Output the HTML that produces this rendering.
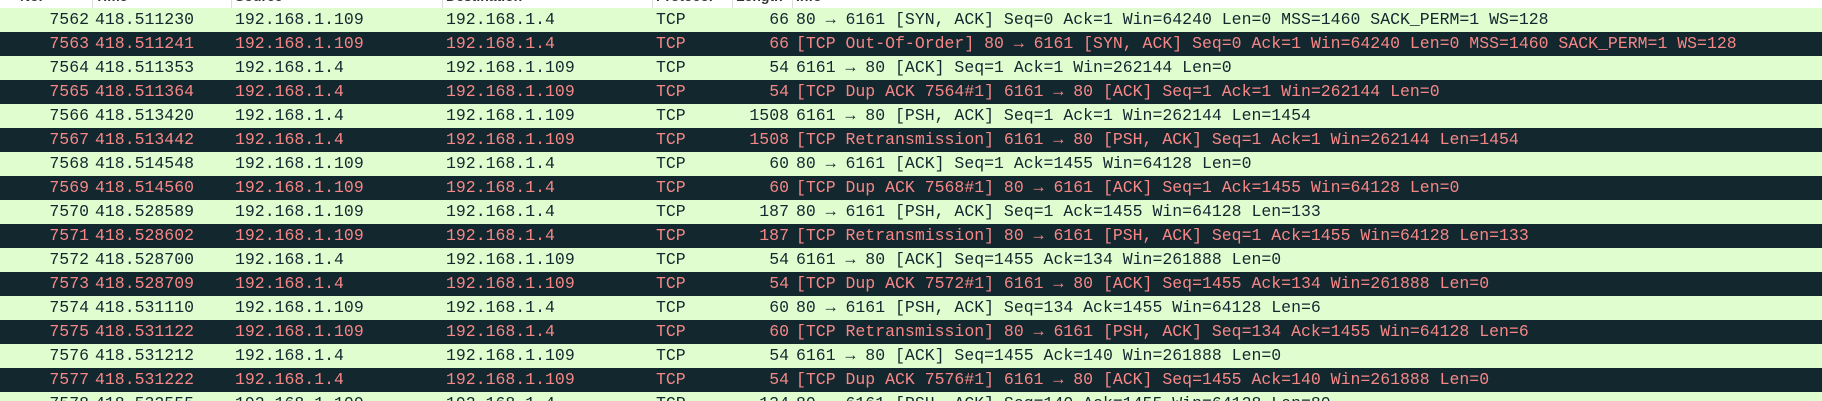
<!DOCTYPE html>
<html><head><meta charset="utf-8"><style>
html,body{margin:0;padding:0;width:1822px;height:401px;overflow:hidden;background:#fff}
body{font-family:"Liberation Mono","DejaVu Sans Mono",monospace;font-size:16.5px}
#w{position:relative;width:1822px;height:401px;overflow:hidden}
.hdr{position:absolute;left:0;top:0;width:1822px;height:8px;background:#fff;overflow:hidden}
.hdr span{position:absolute;top:-14px;line-height:20px;color:#333;font-family:"Liberation Sans",sans-serif;font-size:14px;font-weight:bold}
.sep{position:absolute;top:0;width:1px;height:8px;background:#ddd}
.r{position:absolute;left:0;width:1822px;height:24px;line-height:24px;white-space:pre;overflow:hidden}
.g{background:#e0fdd0;color:#12272e}
.d{background:#12272e;color:#f78787}
.r span{position:absolute;top:0}
.no{right:calc(1822px - 89px)}
.t{left:95px}.s{left:235px}.de{left:446px}.p{left:656px}
.l{right:calc(1822px - 789px)}
.i{left:796px}
</style></head><body><div id="w">
<div class="hdr"><span style="left:20px">No.</span><span style="left:95px">Time</span><span style="left:235px">Source</span><span style="left:446px">Destination</span><span style="left:656px">Protocol</span><span style="left:736px">Length</span><span style="left:796px">Info</span>
<div class="sep" style="left:92px"></div><div class="sep" style="left:231px"></div><div class="sep" style="left:442px"></div><div class="sep" style="left:652px"></div><div class="sep" style="left:732px"></div><div class="sep" style="left:792px"></div></div>

<div class="r g" style="top:8px"><span class="no">7562</span><span class="t">418.511230</span><span class="s">192.168.1.109</span><span class="de">192.168.1.4</span><span class="p">TCP</span><span class="l">66</span><span class="i">80 → 6161 [SYN, ACK] Seq=0 Ack=1 Win=64240 Len=0 MSS=1460 SACK_PERM=1 WS=128</span></div>
<div class="r d" style="top:32px"><span class="no">7563</span><span class="t">418.511241</span><span class="s">192.168.1.109</span><span class="de">192.168.1.4</span><span class="p">TCP</span><span class="l">66</span><span class="i">[TCP Out-Of-Order] 80 → 6161 [SYN, ACK] Seq=0 Ack=1 Win=64240 Len=0 MSS=1460 SACK_PERM=1 WS=128</span></div>
<div class="r g" style="top:56px"><span class="no">7564</span><span class="t">418.511353</span><span class="s">192.168.1.4</span><span class="de">192.168.1.109</span><span class="p">TCP</span><span class="l">54</span><span class="i">6161 → 80 [ACK] Seq=1 Ack=1 Win=262144 Len=0</span></div>
<div class="r d" style="top:80px"><span class="no">7565</span><span class="t">418.511364</span><span class="s">192.168.1.4</span><span class="de">192.168.1.109</span><span class="p">TCP</span><span class="l">54</span><span class="i">[TCP Dup ACK 7564#1] 6161 → 80 [ACK] Seq=1 Ack=1 Win=262144 Len=0</span></div>
<div class="r g" style="top:104px"><span class="no">7566</span><span class="t">418.513420</span><span class="s">192.168.1.4</span><span class="de">192.168.1.109</span><span class="p">TCP</span><span class="l">1508</span><span class="i">6161 → 80 [PSH, ACK] Seq=1 Ack=1 Win=262144 Len=1454</span></div>
<div class="r d" style="top:128px"><span class="no">7567</span><span class="t">418.513442</span><span class="s">192.168.1.4</span><span class="de">192.168.1.109</span><span class="p">TCP</span><span class="l">1508</span><span class="i">[TCP Retransmission] 6161 → 80 [PSH, ACK] Seq=1 Ack=1 Win=262144 Len=1454</span></div>
<div class="r g" style="top:152px"><span class="no">7568</span><span class="t">418.514548</span><span class="s">192.168.1.109</span><span class="de">192.168.1.4</span><span class="p">TCP</span><span class="l">60</span><span class="i">80 → 6161 [ACK] Seq=1 Ack=1455 Win=64128 Len=0</span></div>
<div class="r d" style="top:176px"><span class="no">7569</span><span class="t">418.514560</span><span class="s">192.168.1.109</span><span class="de">192.168.1.4</span><span class="p">TCP</span><span class="l">60</span><span class="i">[TCP Dup ACK 7568#1] 80 → 6161 [ACK] Seq=1 Ack=1455 Win=64128 Len=0</span></div>
<div class="r g" style="top:200px"><span class="no">7570</span><span class="t">418.528589</span><span class="s">192.168.1.109</span><span class="de">192.168.1.4</span><span class="p">TCP</span><span class="l">187</span><span class="i">80 → 6161 [PSH, ACK] Seq=1 Ack=1455 Win=64128 Len=133</span></div>
<div class="r d" style="top:224px"><span class="no">7571</span><span class="t">418.528602</span><span class="s">192.168.1.109</span><span class="de">192.168.1.4</span><span class="p">TCP</span><span class="l">187</span><span class="i">[TCP Retransmission] 80 → 6161 [PSH, ACK] Seq=1 Ack=1455 Win=64128 Len=133</span></div>
<div class="r g" style="top:248px"><span class="no">7572</span><span class="t">418.528700</span><span class="s">192.168.1.4</span><span class="de">192.168.1.109</span><span class="p">TCP</span><span class="l">54</span><span class="i">6161 → 80 [ACK] Seq=1455 Ack=134 Win=261888 Len=0</span></div>
<div class="r d" style="top:272px"><span class="no">7573</span><span class="t">418.528709</span><span class="s">192.168.1.4</span><span class="de">192.168.1.109</span><span class="p">TCP</span><span class="l">54</span><span class="i">[TCP Dup ACK 7572#1] 6161 → 80 [ACK] Seq=1455 Ack=134 Win=261888 Len=0</span></div>
<div class="r g" style="top:296px"><span class="no">7574</span><span class="t">418.531110</span><span class="s">192.168.1.109</span><span class="de">192.168.1.4</span><span class="p">TCP</span><span class="l">60</span><span class="i">80 → 6161 [PSH, ACK] Seq=134 Ack=1455 Win=64128 Len=6</span></div>
<div class="r d" style="top:320px"><span class="no">7575</span><span class="t">418.531122</span><span class="s">192.168.1.109</span><span class="de">192.168.1.4</span><span class="p">TCP</span><span class="l">60</span><span class="i">[TCP Retransmission] 80 → 6161 [PSH, ACK] Seq=134 Ack=1455 Win=64128 Len=6</span></div>
<div class="r g" style="top:344px"><span class="no">7576</span><span class="t">418.531212</span><span class="s">192.168.1.4</span><span class="de">192.168.1.109</span><span class="p">TCP</span><span class="l">54</span><span class="i">6161 → 80 [ACK] Seq=1455 Ack=140 Win=261888 Len=0</span></div>
<div class="r d" style="top:368px"><span class="no">7577</span><span class="t">418.531222</span><span class="s">192.168.1.4</span><span class="de">192.168.1.109</span><span class="p">TCP</span><span class="l">54</span><span class="i">[TCP Dup ACK 7576#1] 6161 → 80 [ACK] Seq=1455 Ack=140 Win=261888 Len=0</span></div>
<div class="r g" style="top:392px"><span class="no">7578</span><span class="t">418.532555</span><span class="s">192.168.1.109</span><span class="de">192.168.1.4</span><span class="p">TCP</span><span class="l">134</span><span class="i">80 → 6161 [PSH, ACK] Seq=140 Ack=1455 Win=64128 Len=80</span></div>
</div></body></html>
